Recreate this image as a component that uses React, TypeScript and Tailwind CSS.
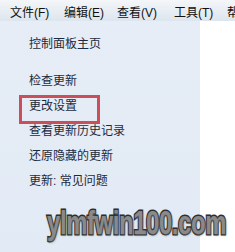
import { clsx as cn } from 'clsx';

const menus = [
  { label: '文件(F)', w: 'w-[54px]' },
  { label: '编辑(E)', w: 'w-[53px]' },
  { label: '查看(V)', w: 'w-[57px]' },
  { label: '工具(T)', w: 'w-[53px]' },
  { label: '帮', w: 'w-[20px]' },
];

const links = [
  { label: '控制面板主页', mt: 'mt-[11px]' },
  { label: '检查更新', mt: 'mt-[12px]' },
  { label: '更改设置', mt: 'mt-0', boxed: true },
  { label: '查看更新历史记录', mt: 'mt-0' },
  { label: '还原隐藏的更新', mt: 'mt-0' },
  { label: '更新: 常见问题', mt: 'mt-0' },
];

export default function App() {
  return (
    <div className="w-[235px] h-[252px] overflow-hidden flex bg-white font-['Liberation_Sans','Noto_Sans_CJK_SC',sans-serif]">
      {/* window edge */}
      <div className="w-[1px] bg-[#5f6f55]" />
      <div className="w-[2px] bg-[#e9eef3]" />

      <div className="flex-1 flex flex-col">
        {/* menu bar */}
        <div className="h-[21px] flex pt-[5px] pl-[10px] bg-gradient-to-b from-[#f4f6f9] to-[#dde5ee] text-[12px] leading-[16px] text-[#111] whitespace-nowrap overflow-hidden">
          {menus.map((m) => (
            <span key={m.label} className={cn('shrink-0', m.w)}>
              {m.label}
            </span>
          ))}
        </div>

        <div className="flex-1 flex relative">
          {/* navigation pane */}
          <div className="w-[200px] bg-gradient-to-b from-[#e6edf6] to-[#e2eaf5] flex flex-col pl-[29px] text-[12px] leading-[25px] text-[#1b2a3e]">
            {links.map((l) => (
              <div key={l.label} className={cn('relative h-[25px] whitespace-nowrap', l.mt)}>
                {l.label}
                {l.boxed && (
                  <span className="absolute -left-[10px] top-[1px] w-[81px] h-[29px] border-[3px] border-[#c9505a]" />
                )}
              </div>
            ))}
          </div>
          <div className="flex-1 bg-white" />

          {/* watermark */}
          <span
            className="absolute left-[47px] top-[184px] origin-left scale-x-[0.7] text-[34px] font-bold leading-none tracking-[-0.5px] text-[#8a8a8a] whitespace-nowrap"
            style={{ WebkitTextStroke: '3px #2a2a2a', paintOrder: 'stroke fill', textShadow: '1px 1px 3px #666' }}
          >
            ylmfwin100.com
          </span>
        </div>
      </div>
    </div>
  );
}
